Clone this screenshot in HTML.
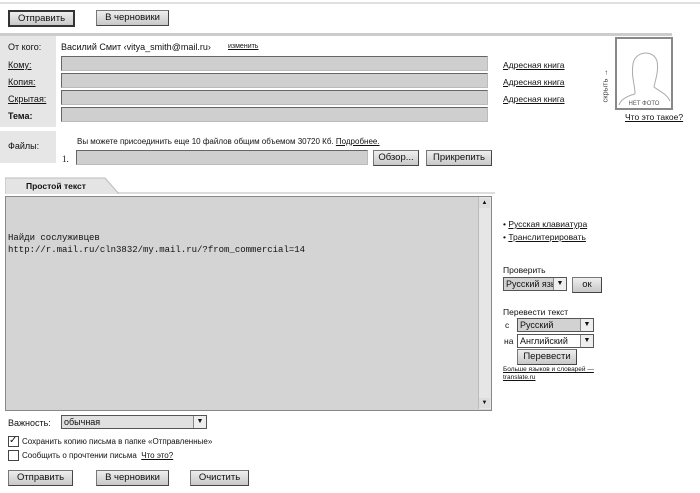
<!DOCTYPE html>
<html><head><meta charset="utf-8"><style>
body{margin:0;width:700px;height:493px;background:#fff;font-family:"Liberation Sans",sans-serif;font-size:9px;color:#111;position:relative;overflow:hidden}
div,span,a{position:absolute}
.btn{background:linear-gradient(#eee,#c8c8c8);border:1px solid #777;border-right-color:#444;border-bottom-color:#444;text-align:center;font-size:9.5px;line-height:14px;height:14px}
.fld{background:#cfcfcf;border:1px solid #666;border-bottom-color:#bbb;border-right-color:#bbb;height:13px}
u{text-decoration:underline}
.lnk{text-decoration:underline;font-size:8.5px}
.sel{background:#d2d2d2;border:1px solid #555;height:12px;font-size:9px;line-height:12px;padding-left:2px}
.sel i{position:absolute;right:0;top:0;width:12px;height:12px;background:#eee;border-left:1px solid #888;font-style:normal;text-align:center;font-size:7px;line-height:12px}
</style></head><body>
<div style="left:0;top:2px;width:700px;height:2px;background:#e0e0e0"></div>
<div class="btn" style="left:8px;top:10px;width:63px;border:2px solid #333;height:13px;line-height:13px">Отправить</div>
<div class="btn" style="left:96px;top:10px;width:71px">В черновики</div>
<div style="left:0;top:33px;width:672px;height:3px;background:#ccc"></div>
<div style="left:0;top:36px;width:56px;height:91px;background:#e6e6e6"></div>
<div style="left:8px;top:42px">От кого:</div>
<div style="left:61px;top:42px">Василий Смит ‹vitya_smith@mail.ru›</div>
<div class="lnk" style="left:228px;top:43px;font-size:7px">изменить</div>
<div style="left:8px;top:60px"><u>Кому:</u></div>
<div style="left:8px;top:77px"><u>Копия:</u></div>
<div style="left:8px;top:94px"><u>Скрытая:</u></div>
<div style="left:8px;top:111px;font-weight:bold">Тема:</div>
<div class="fld" style="left:61px;top:56px;width:425px"></div>
<div class="fld" style="left:61px;top:73px;width:425px"></div>
<div class="fld" style="left:61px;top:90px;width:425px"></div>
<div class="fld" style="left:61px;top:107px;width:425px"></div>
<div class="lnk" style="left:503px;top:60px">Адресная книга</div>
<div class="lnk" style="left:503px;top:77px">Адресная книга</div>
<div class="lnk" style="left:503px;top:94px">Адресная книга</div>
<div style="left:585px;top:78px;transform:rotate(-90deg);font-size:7.5px;color:#444;width:40px">скрыть →</div>
<div style="left:615px;top:37px;width:54px;height:69px;border:2px solid #888;background:#fff">
<svg width="54" height="69" style="position:absolute;left:0;top:0"><path d="M18 55 C18 45 14 38 16 25 C18 12 36 10 40 22 C42 32 38 42 37 48 C42 52 50 55 53 62 M18 55 C10 57 4 60 2 66" fill="none" stroke="#aaa" stroke-width="1"/><text x="27" y="66" font-size="6" text-anchor="middle" fill="#555" font-family="Liberation Sans">НЕТ ФОТО</text></svg></div>
<div class="lnk" style="left:625px;top:112px">Что это такое?</div>
<div style="left:0;top:131px;width:56px;height:32px;background:#e6e6e6"></div>
<div style="left:8px;top:141px">Файлы:</div>
<div style="left:77px;top:137px;font-size:8px">Вы можете присоединить еще 10 файлов общим объемом 30720 Кб. <u>Подробнее.</u></div>
<div style="left:62px;top:154px;font-family:'Liberation Serif';font-size:9px">1.</div>
<div class="fld" style="left:76px;top:150px;width:290px"></div>
<div class="btn" style="left:373px;top:150px;width:44px">Обзор...</div>
<div class="btn" style="left:426px;top:150px;width:64px">Прикрепить</div>
<div style="left:5px;top:192px;width:490px;height:2px;background:#ddd"></div>
<svg width="120" height="17" style="position:absolute;left:5px;top:177px"><path d="M0 17 V1 H100 L114 17" fill="#e4e4e4" stroke="#bbb"/></svg>
<div style="left:26px;top:181px;font-weight:bold;font-size:8.5px">Простой текст</div>
<div style="left:5px;top:196px;width:485px;height:213px;background:#d4d4d4;border:1px solid #888"></div>
<div style="left:478px;top:197px;width:12px;height:212px;background:#e6e6e6;border-left:1px solid #bbb"></div>
<div style="left:479px;top:198px;width:11px;height:10px;background:#ddd;font-size:6px;text-align:center;line-height:10px">▲</div>
<div style="left:479px;top:398px;width:11px;height:10px;background:#ddd;font-size:6px;text-align:center;line-height:10px">▼</div>
<div style="left:8px;top:232px;font-family:'Liberation Mono';font-size:9px;line-height:12px">Найди сослуживцев<br>http://r.mail.ru/cln3832/my.mail.ru/?from_commercial=14</div>
<div style="left:503px;top:219px;font-size:8.5px">•&nbsp;<u>Русская клавиатура</u></div>
<div style="left:503px;top:232px;font-size:8.5px">•&nbsp;<u>Транслитерировать</u></div>
<div style="left:503px;top:265px;font-size:8.5px">Проверить</div>
<div class="sel" style="left:503px;top:277px;width:60px">Русский язы<i>▼</i></div>
<div class="btn" style="left:572px;top:277px;width:28px">ок</div>
<div style="left:503px;top:307px;font-size:8.5px">Перевести текст</div>
<div style="left:505px;top:320px;font-size:8.5px">с</div>
<div style="left:504px;top:336px;font-size:8.5px">на</div>
<div class="sel" style="left:517px;top:318px;width:73px">Русский<i>▼</i></div>
<div class="sel" style="left:517px;top:334px;width:73px;background:#fff">Английский<i>▼</i></div>
<div class="btn" style="left:517px;top:349px;width:58px">Перевести</div>
<div style="left:503px;top:366px;font-size:6.5px;line-height:8px"><u>Больше языков и словарей —<br>translate.ru</u></div>
<div style="left:8px;top:418px">Важность:</div>
<div class="sel" style="left:61px;top:415px;width:142px;background:#e0e0e0">обычная<i>▼</i></div>
<div style="left:8px;top:436px;width:9px;height:9px;border:1px solid #444;font-size:10px;line-height:8px">✓</div>
<div style="left:22px;top:437px;font-size:8px">Сохранить копию письма в папке «Отправленные»</div>
<div style="left:8px;top:450px;width:9px;height:9px;border:1px solid #444"></div>
<div style="left:22px;top:451px;font-size:8px">Сообщить о прочтении письма &nbsp;<u>Что это?</u></div>
<div class="btn" style="left:8px;top:470px;width:63px">Отправить</div>
<div class="btn" style="left:96px;top:470px;width:71px">В черновики</div>
<div class="btn" style="left:190px;top:470px;width:57px">Очистить</div>
</body></html>
